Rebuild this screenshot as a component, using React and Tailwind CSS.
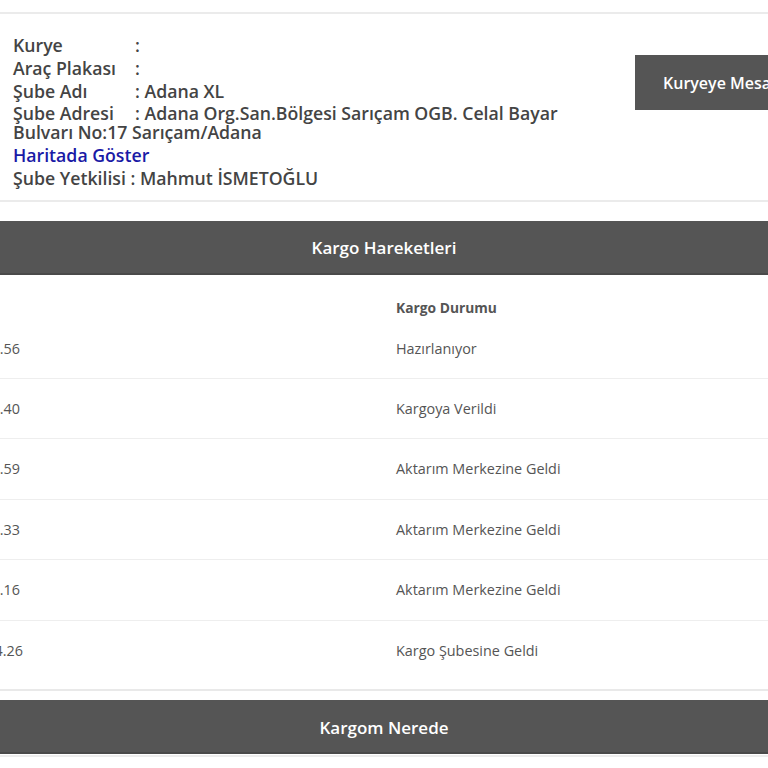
const info = [
  { label: "Kurye", value: "" },
  { label: "Araç Plakası", value: "" },
  { label: "Şube Adı", value: "Adana XL" },
  {
    label: "Şube Adresi",
    value: "Adana Org.San.Bölgesi Sarıçam OGB. Celal Bayar Bulvarı No:17 Sarıçam/Adana"
  }
];

const moves = [
  { date: "12.03.2024 09:14.56", status: "Hazırlanıyor" },
  { date: "12.03.2024 17:22.40", status: "Kargoya Verildi" },
  { date: "13.03.2024 02:05.59", status: "Aktarım Merkezine Geldi" },
  { date: "13.03.2024 06:48.33", status: "Aktarım Merkezine Geldi" },
  { date: "13.03.2024 21:31.16", status: "Aktarım Merkezine Geldi" },
  { date: "14.03.2024 08:44.26", status: "Kargo Şubesine Geldi" }
];

const InfoRow = ({ label, value }) => (
  <div className="leading-[19px] mb-[3.8px]">
    <span className="inline-block w-[122px]">{label}</span>: {value}
  </div>
);

const Bar = ({ title }) => (
  <div className="h-[54px] bg-[#555555] border-b-2 border-[#4a4a4a] flex items-center justify-center pt-[2px] text-white text-[17px] font-semibold">
    {title}
  </div>
);

export default function App() {
  return (
    <div
      className="w-[768px] h-[768px] overflow-hidden bg-white"
      style={{ fontFamily: '"Open Sans", "Noto Sans", sans-serif' }}
    >
      <div className="h-[12px]" />
      <div className="border-t-2 border-b-2 border-[#ebebeb] flex pb-[12px]">
        <div className="w-[600px] shrink-0 pl-[13px] pt-[22px] text-[17.7px] font-semibold text-[#444]">
          {info.map((r) => (
            <InfoRow key={r.label} label={r.label} value={r.value} />
          ))}
          <div className="leading-[19px] mb-[3.8px] text-[#1a1aa6]">Haritada Göster</div>
          <div className="leading-[19px]">Şube Yetkilisi : Mahmut İSMETOĞLU</div>
        </div>
        <div className="pl-[35px] pt-[41px]">
          <button className="h-[55px] w-[200px] bg-[#555555] text-white text-[16px] font-semibold text-left pl-[28px] whitespace-nowrap">
            Kuryeye Mesaj Gönder
          </button>
        </div>
      </div>

      <div className="h-[19px]" />
      <Bar title="Kargo Hareketleri" />

      <div className="border-b-2 border-[#e9e9e9] pb-[9px] text-[#555]">
        <div className="h-[45px] flex pt-[23px] text-[13.8px] font-bold">
          <div className="w-[396px] shrink-0" />
          <div>Kargo Durumu</div>
        </div>
        {moves.map((m, i) => (
          <div
            key={i}
            className={`flex items-center text-[14.4px] ${i > 0 ? "h-[60.5px] border-t border-[#eeeeee]" : "h-[58px]"}`}
          >
            <div className="w-[396px] shrink-0">
              <div
                className={`${i === 5 ? "w-[23px]" : "w-[20px]"} overflow-hidden flex justify-end whitespace-nowrap`}
              >
                <span className="shrink-0">{m.date}</span>
              </div>
            </div>
            <div>{m.status}</div>
          </div>
        ))}
      </div>

      <div className="h-[9px]" />
      <Bar title="Kargom Nerede" />
      <div className="border-b-2 border-[#ededed] h-[3px]" />
    </div>
  );
}
